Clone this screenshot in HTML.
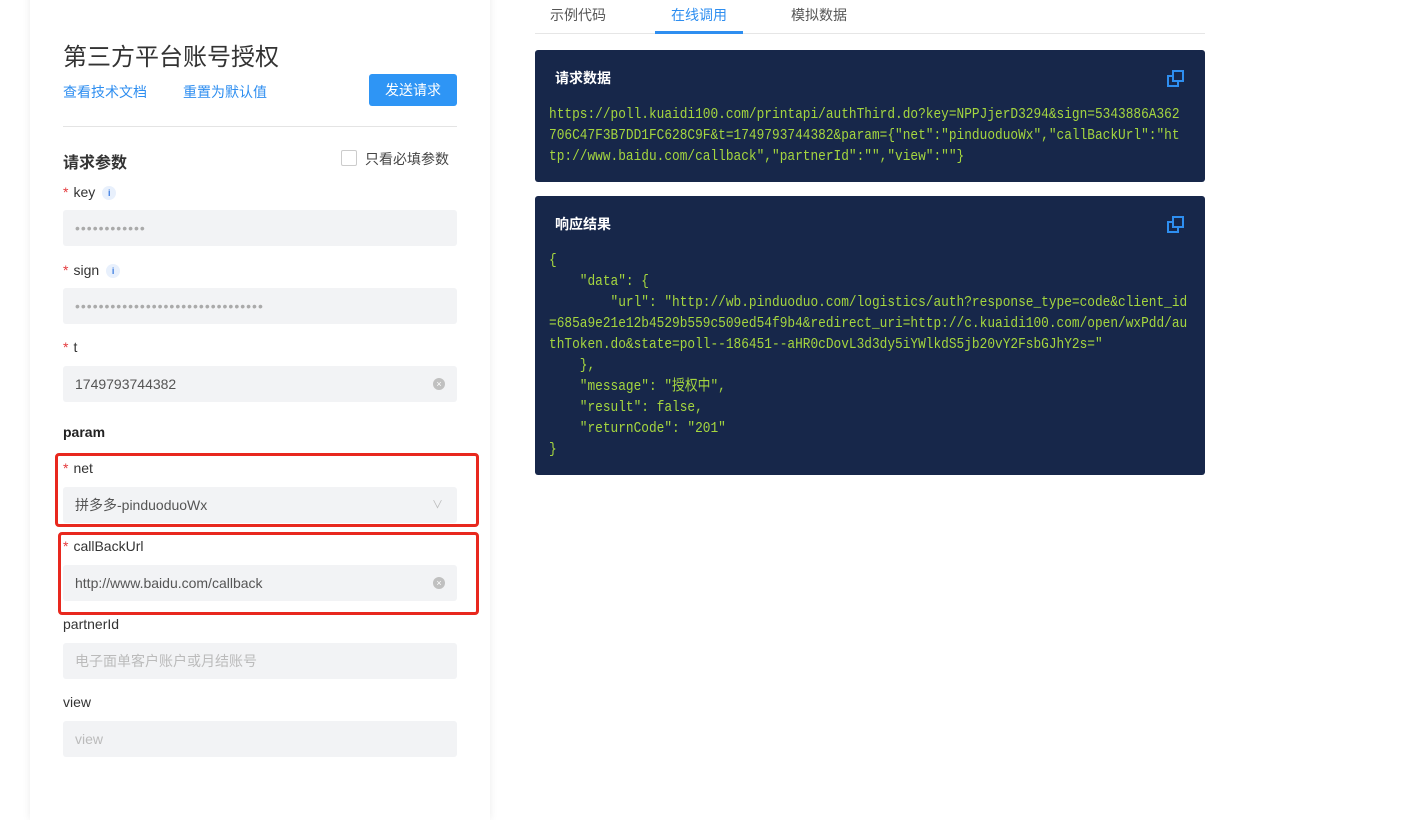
<!DOCTYPE html>
<html><head><meta charset="utf-8"><style>
*{margin:0;padding:0;box-sizing:border-box}
body{width:1421px;height:801px;background:#fff;font-family:"Liberation Sans","Noto Sans CJK SC",sans-serif;position:relative;overflow:hidden;color:#333}
.a{position:absolute}
.panel{left:30px;top:-10px;width:460px;height:830px;background:#fff;box-shadow:0 0 8px rgba(0,0,0,.08)}
.lbl{font-size:14px;color:#333;left:63px}
.lbl b{color:#e4393c;font-weight:normal;margin-right:5px}
.inp{left:63px;width:394px;height:36px;background:#f2f3f5;border-radius:3px;font-size:14px;color:#555;padding-left:12px;line-height:36px}
.clr{position:absolute;right:12px;top:12px;width:12px;height:12px;border-radius:50%;background:#c0c0c0;color:#fff;font-size:9px;line-height:12px;text-align:center}
.info{display:inline-block;width:14px;height:14px;border-radius:50%;background:#e8f0fc;color:#3a7be0;font-size:9px;text-align:center;line-height:14px;font-weight:bold;margin-left:7px;vertical-align:middle}
.dark{left:535px;width:670px;background:#17274a;border-radius:3px}
.dark h3{position:absolute;left:20px;top:18px;color:#fff;font-size:14px;font-weight:bold}
pre{font-family:"Liberation Mono","Noto Sans CJK SC",monospace;font-size:14.8px;line-height:21px;color:#a5d63f;position:absolute;left:14px;white-space:pre;transform:scaleX(0.866);transform-origin:0 0}
.red{border:3px solid #e8281e;border-radius:4px}
</style></head><body>
<div class="a panel"></div>
<div class="a" style="left:63px;top:37px;font-size:24px;color:#333">第三方平台账号授权</div>
<div class="a" style="left:63px;top:82px;font-size:14px;color:#2e8ef0">查看技术文档</div>
<div class="a" style="left:183px;top:82px;font-size:14px;color:#2e8ef0">重置为默认值</div>
<div class="a" style="left:369px;top:74px;width:88px;height:32px;background:#2e95f5;border-radius:3px;color:#fff;font-size:14px;text-align:center;line-height:32px">发送请求</div>
<div class="a" style="left:63px;top:126px;width:394px;height:1px;background:#e4e4e4"></div>
<div class="a" style="left:63px;top:149px;font-size:16px;font-weight:bold;color:#333">请求参数</div>
<div class="a" style="left:341px;top:150px;width:16px;height:16px;border:1px solid #ccc;border-radius:2px"></div>
<div class="a" style="left:365px;top:149px;font-size:14px;color:#444">只看必填参数</div>

<div class="a lbl" style="top:184px"><b>*</b>key<span class="info">i</span></div>
<div class="a inp" style="top:210px;color:#aaa;letter-spacing:1px">••••••••••••</div>
<div class="a lbl" style="top:262px"><b>*</b>sign<span class="info">i</span></div>
<div class="a inp" style="top:288px;color:#aaa;letter-spacing:1px">••••••••••••••••••••••••••••••••</div>
<div class="a lbl" style="top:339px"><b>*</b>t</div>
<div class="a inp" style="top:366px">1749793744382<span class="clr">×</span></div>
<div class="a" style="left:63px;top:424px;font-size:14px;font-weight:bold;color:#222">param</div>

<div class="a red" style="left:55px;top:453px;width:424px;height:74px"></div>
<div class="a red" style="left:58px;top:532px;width:421px;height:83px"></div>
<div class="a lbl" style="top:460px"><b>*</b>net</div>
<div class="a inp" style="top:487px">拼多多-pinduoduoWx<span style="position:absolute;right:14px;top:0;color:#bbb;font-size:11px">&#8744;</span></div>
<div class="a lbl" style="top:538px"><b>*</b>callBackUrl</div>
<div class="a inp" style="top:565px">http://www.baidu.com/callback<span class="clr">×</span></div>
<div class="a lbl" style="top:616px">partnerId</div>
<div class="a inp" style="top:643px;color:#bbb">电子面单客户账户或月结账号</div>
<div class="a lbl" style="top:694px">view</div>
<div class="a inp" style="top:721px;color:#bbb">view</div>

<div class="a" style="left:550px;top:5px;font-size:14px;color:#555">示例代码</div>
<div class="a" style="left:671px;top:5px;font-size:14px;color:#2e8ef0">在线调用</div>
<div class="a" style="left:791px;top:5px;font-size:14px;color:#555">模拟数据</div>
<div class="a" style="left:535px;top:33px;width:670px;height:1px;background:#e6e6e6"></div>
<div class="a" style="left:655px;top:31px;width:88px;height:3px;background:#2e8ef0"></div>

<svg width="0" height="0" style="position:absolute"><defs><g id="cp"><rect x="1" y="6" width="10" height="10" fill="none" stroke="#2e8ef0" stroke-width="2"/><rect x="6" y="1" width="10" height="10" fill="#17274a" stroke="#2e8ef0" stroke-width="2"/></g></defs></svg>
<div class="a dark" style="top:50px;height:132px"><h3>请求数据</h3>
<svg class="a" style="left:632px;top:20px" width="18" height="18"><use href="#cp"/></svg>
<pre style="top:55px">https://poll.kuaidi100.com/printapi/authThird.do?key=NPPJjerD3294&amp;sign=5343886A362
706C47F3B7DD1FC628C9F&amp;t=1749793744382&amp;param={"net":"pinduoduoWx","callBackUrl":"ht
tp://www.baidu.com/callback","partnerId":"","view":""}</pre></div>
<div class="a dark" style="top:196px;height:279px"><h3>响应结果</h3>
<svg class="a" style="left:632px;top:20px" width="18" height="18"><use href="#cp"/></svg>
<pre style="top:55px">{
    "data": {
        "url": "http://wb.pinduoduo.com/logistics/auth?response_type=code&amp;client_id
=685a9e21e12b4529b559c509ed54f9b4&amp;redirect_uri=http://c.kuaidi100.com/open/wxPdd/au
thToken.do&amp;state=poll--186451--aHR0cDovL3d3dy5iYWlkdS5jb20vY2FsbGJhY2s="
    },
    "message": "授权中",
    "result": false,
    "returnCode": "201"
}</pre></div>
</body></html>
